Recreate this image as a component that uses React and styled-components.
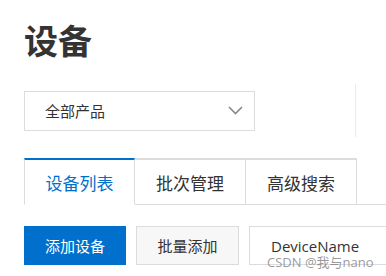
import styled, { createGlobalStyle } from 'styled-components'

const Global = createGlobalStyle`
  html, body { margin: 0; padding: 0; background: #fff; overflow: hidden; }
  body { font-family: "Noto Sans", "Noto Sans CJK SC", sans-serif; }
`

const Page = styled.div`
  position: relative;
  width: 386px;
  height: 276px;
  padding-left: 24px;
  box-sizing: border-box;
  overflow: hidden;
`

const Title = styled.h1`
  margin: 0;
  padding-top: 19px;
  font-size: 34px;
  line-height: 42px;
  font-weight: 700;
  color: #333;
  font-family: "Noto Sans CJK SC", sans-serif;
`

const FilterRow = styled.div`
  display: flex;
  align-items: center;
  margin-top: 23px;
`

const Select = styled.div`
  width: 231px;
  height: 40px;
  box-sizing: border-box;
  border: 1px solid #dcdcdc;
  display: flex;
  align-items: center;
  justify-content: space-between;
  padding: 0 11px 0 20px;
  font-size: 15px;
  color: #333;
  font-family: "Noto Sans CJK SC", sans-serif;
`

const Divider = styled.div`
  width: 1px;
  height: 53px;
  background: #ebebeb;
  margin-left: 100px;
`

const Tabs = styled.div`
  display: flex;
  margin-top: 21px;
  height: 47px;
`

const Tab = styled.div`
  width: 111px;
  box-sizing: border-box;
  border: 1px solid #dcdcdc;
  border-left-width: ${p => (p.$first ? 1 : 0)}px;
  border-top: 2px solid ${p => (p.$active ? '#0070cc' : '#dcdcdc')};
  border-bottom-color: ${p => (p.$active ? 'transparent' : '#dcdcdc')};
  display: flex;
  align-items: center;
  justify-content: center;
  font-size: 17px;
  color: ${p => (p.$active ? '#0070cc' : '#333')};
  font-family: "Noto Sans CJK SC", sans-serif;
`

const TabFill = styled.div`
  flex: 1;
  border-bottom: 1px solid #dcdcdc;
`

const Toolbar = styled.div`
  display: flex;
  gap: 10px;
  margin-top: 21px;
  padding-bottom: 11px;
  border-bottom: 1px solid #e8e8e8;
`

const Button = styled.div`
  width: ${p => p.$w}px;
  height: 39px;
  box-sizing: border-box;
  display: flex;
  align-items: center;
  justify-content: center;
  font-size: 15px;
  font-family: "Noto Sans CJK SC", sans-serif;
  background: ${p => (p.$primary ? '#0070cc' : '#f7f7f7')};
  color: ${p => (p.$primary ? '#fff' : '#333')};
  border: 1px solid ${p => (p.$primary ? '#0070cc' : '#dcdcdc')};
`

const Input = styled.div`
  flex: 1;
  height: 39px;
  box-sizing: border-box;
  border: 1px solid #dcdcdc;
  border-right: none;
  display: flex;
  align-items: center;
  padding-left: 21px;
  font-size: 15px;
  color: #333;
  font-family: "Open Sans", sans-serif;
`

const Watermark = styled.div`
  position: absolute;
  left: 267px;
  top: 252px;
  font-size: 13px;
  color: rgba(120, 120, 120, 0.75);
  font-family: "Open Sans", "Noto Sans CJK SC", sans-serif;
  white-space: nowrap;
`

export default function App() {
  return (
    <Page>
      <Global />
      <Title>设备</Title>
      <FilterRow>
        <Select>
          <span>全部产品</span>
          <svg width="15" height="9" viewBox="0 0 15 9">
            <path d="M1 1l6.5 6.5L14 1" fill="none" stroke="#888" strokeWidth="1.6" />
          </svg>
        </Select>
        <Divider />
      </FilterRow>
      <Tabs>
        <Tab $first $active>设备列表</Tab>
        <Tab>批次管理</Tab>
        <Tab>高级搜索</Tab>
        <TabFill />
      </Tabs>
      <Toolbar>
        <Button $primary $w={102}>添加设备</Button>
        <Button $w={103}>批量添加</Button>
        <Input>DeviceName</Input>
      </Toolbar>
      <Watermark>CSDN @我与nano</Watermark>
    </Page>
  )
}
